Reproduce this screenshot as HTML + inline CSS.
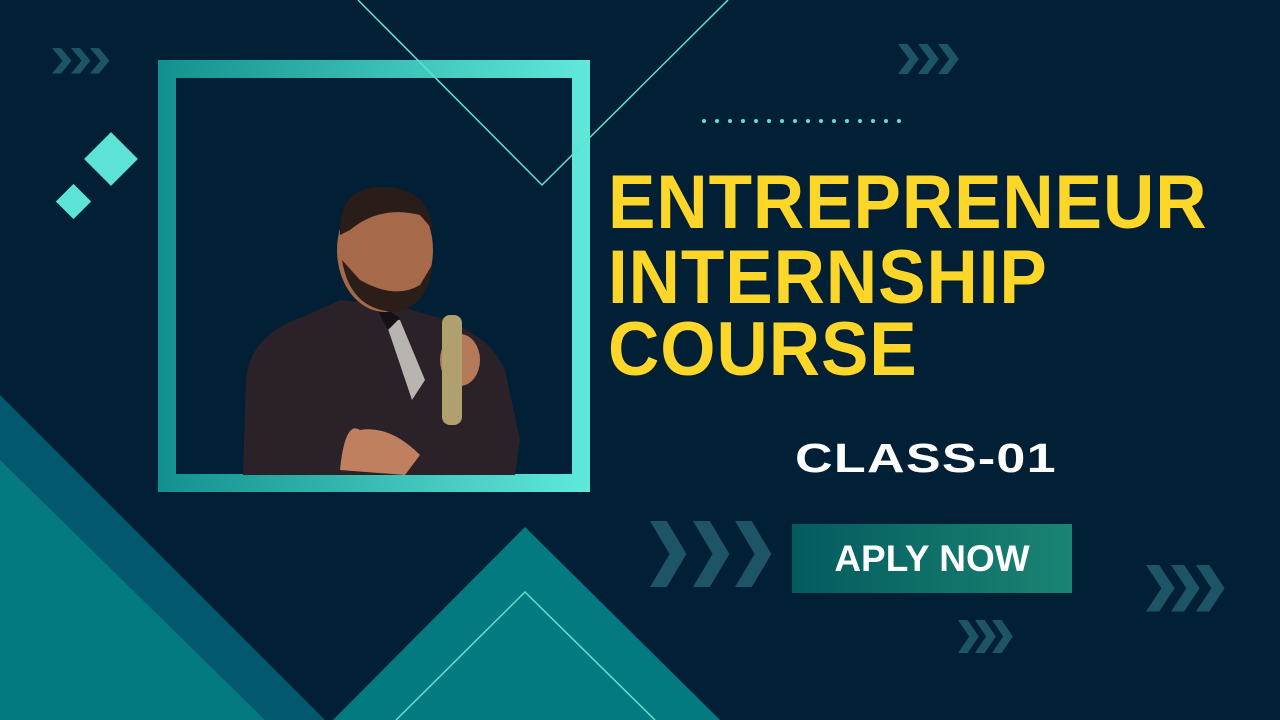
<!DOCTYPE html>
<html><head><style>
html,body{margin:0;padding:0;}
body{width:1280px;height:720px;background:#011f35;overflow:hidden;position:relative;font-family:"Liberation Sans",sans-serif;}
.t{position:absolute;color:#fdd62a;font-weight:900;font-size:76px;left:608px;letter-spacing:1px;transform-origin:left top;transform:scaleX(0.935);line-height:1;}
</style></head><body>
<svg width="1280" height="720" style="position:absolute;left:0;top:0">
<defs>
<linearGradient id="fr" x1="0" x2="1" y1="0" y2="0"><stop offset="0" stop-color="#12908e"/><stop offset="1" stop-color="#60e9da"/></linearGradient>
<linearGradient id="bt" x1="0" x2="1"><stop offset="0" stop-color="#035b5e"/><stop offset="1" stop-color="#1b8473"/></linearGradient>
<polygon id="c" points="0,0 12,0 26,15 12,30 0,30 14,15"/>
</defs>
<polygon points="0,395 325,720 0,720" fill="#02586f"/>
<polygon points="0,460 265,720 0,720" fill="#037a80"/>
<polygon points="525,527 333,720 720,720" fill="#037a80"/>
<polyline points="396,720 525,592 655,720" fill="none" stroke="#5ce3d6" stroke-width="1.5"/>
<rect x="92" y="140" width="38" height="38" fill="#5ce3d6" transform="rotate(45 111 159)"/>
<rect x="61" y="189" width="25" height="25" fill="#5ce3d6" transform="rotate(45 73.5 201.5)"/>
<rect x="158" y="60" width="432" height="432" fill="url(#fr)"/>
<rect x="176" y="78" width="396" height="396" fill="#011f35"/>
<polyline points="358,0 542,185 728,0" fill="none" stroke="#5ce3d6" stroke-width="1.5"/>
<path d="M243,475 L246,380 Q250,335 300,318 L340,300 L395,305 L440,318 Q490,335 505,370 L520,440 L515,475 Z" fill="#2a2228"/>
<path d="M385,320 L400,320 L425,380 L412,400 Z" fill="#b8b4b0"/>
<path d="M372,300 L400,318 L388,330 Z" fill="#141014"/>
<ellipse cx="385" cy="250" rx="48" ry="62" fill="#a66a4a"/>
<path d="M340,235 Q338,185 385,187 Q428,188 433,230 L420,215 Q380,205 350,230 Z" fill="#2a1c18"/>
<path d="M342,260 Q350,310 395,312 Q430,305 432,265 L420,285 Q395,300 360,280 Z" fill="#2b1d18"/>
<ellipse cx="460" cy="360" rx="20" ry="26" fill="#b57a5a"/>
<rect x="442" y="315" width="20" height="110" rx="8" fill="#b0a070"/>
<path d="M340,470 Q345,420 360,430 Q390,425 420,455 L405,475 Z" fill="#c08060"/>
<g fill="#1e5566">
<use href="#c" transform="translate(52,48) scale(0.75,0.85)"/><use href="#c" transform="translate(71,48) scale(0.75,0.85)"/><use href="#c" transform="translate(90,48) scale(0.75,0.85)"/>
<use href="#c" transform="translate(898,44) scale(0.8,1)"/><use href="#c" transform="translate(918,44) scale(0.8,1)"/><use href="#c" transform="translate(938,44) scale(0.8,1)"/>
<use href="#c" transform="translate(650,521) scale(1.4,2.2)"/><use href="#c" transform="translate(693,521) scale(1.4,2.2)"/><use href="#c" transform="translate(735,521) scale(1.4,2.2)"/>
<use href="#c" transform="translate(1146,565) scale(1.1,1.55)"/><use href="#c" transform="translate(1171,565) scale(1.1,1.55)"/><use href="#c" transform="translate(1196,565) scale(1.1,1.55)"/>
<use href="#c" transform="translate(958,620) scale(0.8,1.1)"/><use href="#c" transform="translate(975,620) scale(0.8,1.1)"/><use href="#c" transform="translate(992,620) scale(0.8,1.1)"/>
</g>
<g fill="#5ce3d6">
<circle cx="704" cy="121" r="2"/><circle cx="717" cy="121" r="2"/><circle cx="730" cy="121" r="2"/><circle cx="743" cy="121" r="2"/><circle cx="756" cy="121" r="2"/><circle cx="769" cy="121" r="2"/><circle cx="782" cy="121" r="2"/><circle cx="795" cy="121" r="2"/><circle cx="808" cy="121" r="2"/><circle cx="821" cy="121" r="2"/><circle cx="834" cy="121" r="2"/><circle cx="847" cy="121" r="2"/><circle cx="860" cy="121" r="2"/><circle cx="873" cy="121" r="2"/><circle cx="886" cy="121" r="2"/><circle cx="899" cy="121" r="2"/>
</g>
<rect x="792" y="524" width="280" height="69" fill="url(#bt)"/>
</svg>
<div class="t" style="top:165px">ENTREPRENEUR</div>
<div class="t" style="top:240px">INTERNSHIP</div>
<div class="t" style="top:312px">COURSE</div>
<div style="position:absolute;left:795px;top:435px;color:#fff;font-weight:900;font-size:41px;letter-spacing:1px;transform:scaleX(1.27);transform-origin:left top">CLASS-01</div>
<div style="position:absolute;left:792px;top:524px;width:280px;height:69px;line-height:69px;text-align:center;color:#fff;font-weight:bold;font-size:37px">APLY NOW</div>
</body></html>
